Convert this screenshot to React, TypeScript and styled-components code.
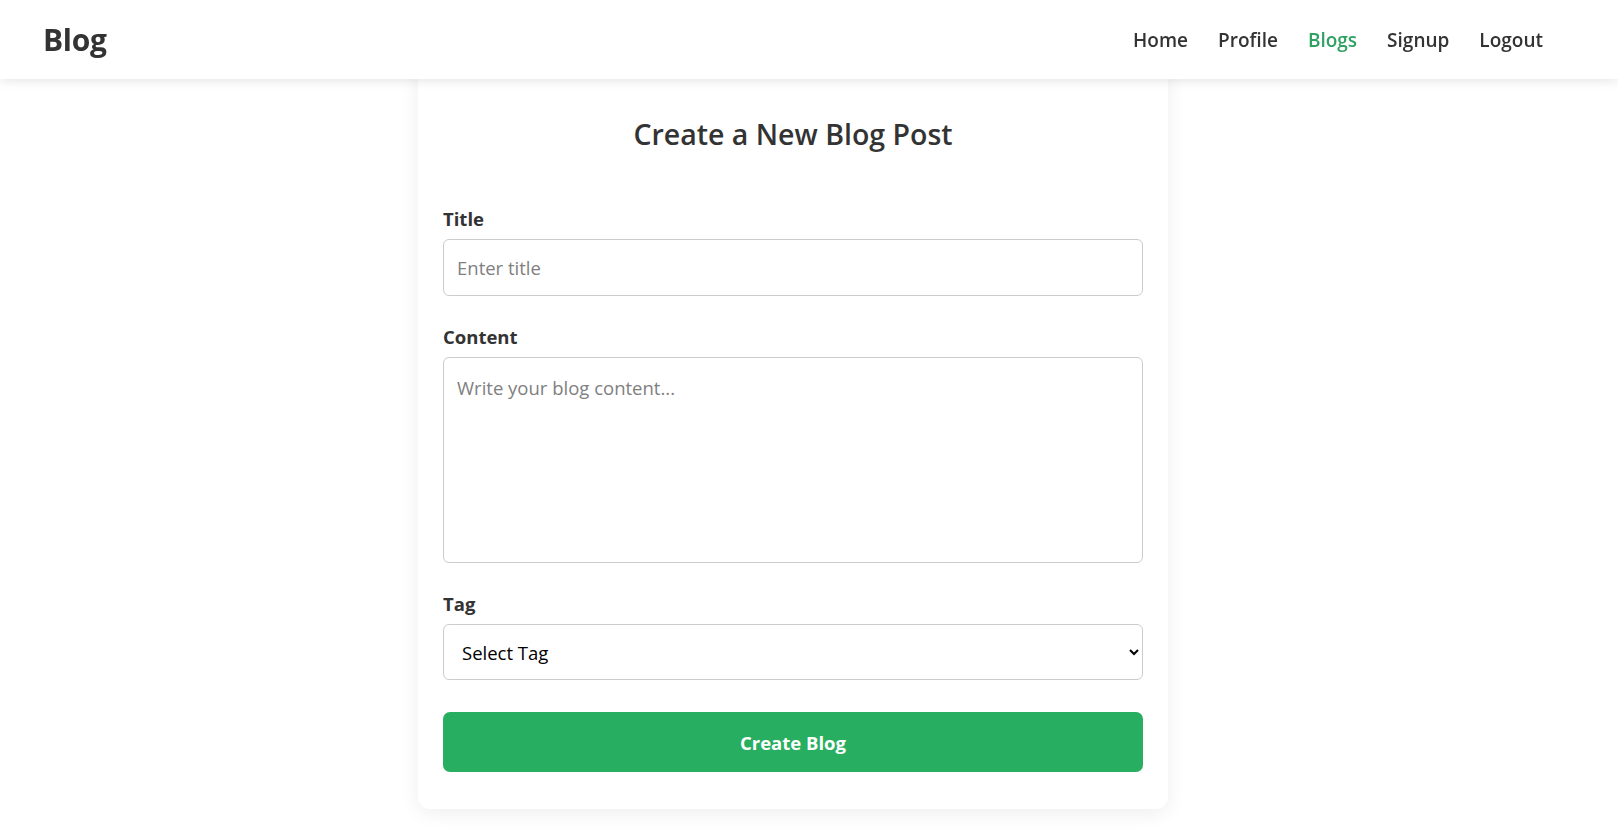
import React from "react";
import styled, { createGlobalStyle } from "styled-components";

const GlobalStyle = createGlobalStyle`
  * { box-sizing: border-box; }
  html, body { margin: 0; padding: 0; background: #ffffff; }
  body {
    font-family: "Open Sans", "Noto Sans", "Liberation Sans", sans-serif;
    color: #333333;
  }
`;

const Header = styled.header`
  position: fixed;
  top: 0;
  left: 0;
  right: 0;
  z-index: 10;
  height: 79px;
  display: flex;
  align-items: center;
  justify-content: space-between;
  padding: 0 75px 0 43px;
  background: #ffffff;
  box-shadow: 0 2px 10px rgba(0, 0, 0, 0.1);
`;

const Logo = styled.div`
  font-size: 30px;
  font-weight: 700;
  color: #333333;
  letter-spacing: -0.3px;
`;

const Nav = styled.nav`
  display: flex;
  align-items: center;
  gap: 30px;
`;

const NavLink = styled.a<{ $active?: boolean }>`
  font-size: 19px;
  font-weight: 600;
  text-decoration: none;
  color: ${(p) => (p.$active ? "#2fa163" : "#333333")};
  cursor: pointer;
`;

const Main = styled.main`
  display: flex;
  padding: 40px 0 25px 418px;
`;

const Card = styled.section`
  width: 750px;
  background: #ffffff;
  border-radius: 12px;
  box-shadow: 0 4px 20px rgba(0, 0, 0, 0.07);
  padding: 76px 25px 37px;
`;

const Heading = styled.h2`
  margin: 0 0 56px;
  text-align: center;
  font-size: 28.5px;
  font-weight: 600;
  line-height: 36px;
  color: #333333;
`;

const Form = styled.form`
  display: flex;
  flex-direction: column;
`;

const Group = styled.div`
  display: flex;
  flex-direction: column;
  margin-bottom: 30px;
`;

const Label = styled.label`
  font-size: 18.5px;
  font-weight: 700;
  line-height: 22px;
  margin-bottom: 9px;
  color: #333333;
`;

const fieldBase = `
  width: 100%;
  font-family: "Open Sans", "Noto Sans", "Liberation Sans", sans-serif;
  font-size: 18.5px;
  color: #222;
  border: 1px solid #cccccc;
  border-radius: 6px;
  background: #ffffff;
  outline: none;
  &::placeholder { color: #808080; }
`;

const Input = styled.input`
  ${fieldBase}
  height: 57px;
  padding: 0 13px;
`;

const TextArea = styled.textarea`
  ${fieldBase}
  height: 206px;
  padding: 17px 13px 13px;
  resize: none;
  line-height: 26px;
`;

const Select = styled.select`
  ${fieldBase}
  height: 56px;
  padding: 0 10px 0 14px;
  color: #000;
`;

const Button = styled.button`
  margin-top: 2px;
  height: 60px;
  width: 100%;
  border: none;
  border-radius: 7px;
  background: #27ae60;
  color: #ffffff;
  font-family: "Open Sans", "Noto Sans", "Liberation Sans", sans-serif;
  font-size: 18.5px;
  font-weight: 700;
  cursor: pointer;
`;

export default function App() {
  return (
    <>
      <GlobalStyle />
      <Header>
        <Logo>Blog</Logo>
        <Nav>
          <NavLink>Home</NavLink>
          <NavLink>Profile</NavLink>
          <NavLink $active>Blogs</NavLink>
          <NavLink>Signup</NavLink>
          <NavLink>Logout</NavLink>
        </Nav>
      </Header>
      <Main>
        <Card>
          <Heading>Create a New Blog Post</Heading>
          <Form onSubmit={(e) => e.preventDefault()}>
            <Group>
              <Label>Title</Label>
              <Input placeholder="Enter title" />
            </Group>
            <Group>
              <Label>Content</Label>
              <TextArea placeholder="Write your blog content..." />
            </Group>
            <Group>
              <Label>Tag</Label>
              <Select defaultValue="">
                <option value="">Select Tag</option>
                <option value="tech">Tech</option>
                <option value="life">Life</option>
              </Select>
            </Group>
            <Button type="submit">Create Blog</Button>
          </Form>
        </Card>
      </Main>
    </>
  );
}
